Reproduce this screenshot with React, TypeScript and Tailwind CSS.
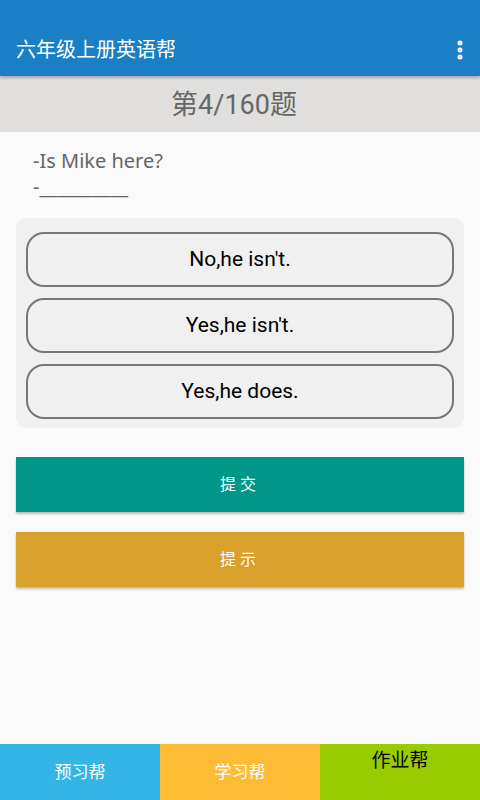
import { EllipsisVertical } from "lucide-react";

const options = ["No,he isn't.", "Yes,he isn't.", "Yes,he does."];

const App = () => {
  return (
    <div className="flex h-[800px] w-[480px] flex-col bg-[#fafafa] font-['Roboto','Noto_Sans_CJK_SC',sans-serif]">
      {/* Toolbar */}
      <div className="relative z-10 flex h-[76px] shrink-0 items-end bg-[#1a7fc4] pb-[12px] pl-4 pr-2 shadow-[0_2px_3px_rgba(0,0,0,0.25)]">
        <h1 className="flex-1 text-[20px] leading-[28px] text-white">六年级上册英语帮</h1>
        <EllipsisVertical className="mb-[2px] h-6 w-6 text-white" strokeWidth={3} />
      </div>

      {/* Question number */}
      <div className="flex h-[56px] shrink-0 items-center justify-center bg-[#e0dfdd] pr-[12px]">
        <span className="mt-[3px] text-[27px] text-[#666]">第4/160题</span>
      </div>

      <div className="flex-1">
        {/* Question */}
        <div className="px-[33px] pt-[16px] font-['Noto_Sans','Noto_Sans_CJK_SC',sans-serif] text-[20px] leading-[26px] text-[#666]">
          <p>-Is Mike here?</p>
          <p>-__________</p>
        </div>

        {/* Options */}
        <div className="mx-4 mt-[18px] flex flex-col gap-[11px] rounded-[10px] bg-[#f0f0f0] px-[10px] pb-[9px] pt-[14px]">
          {options.map((o) => (
            <button
              key={o}
              className="flex h-[55px] items-center justify-center rounded-[18px] border-2 border-[#777] bg-[#f0f0f0] text-[21px] text-black"
            >
              {o}
            </button>
          ))}
        </div>

        {/* Actions */}
        <button className="mx-4 mt-[29px] flex h-[55px] w-[448px] items-center justify-center bg-[#009688] text-[16px] tracking-[4px] text-white shadow-[0_2px_2px_rgba(0,0,0,0.25)]">
          提交
        </button>
        <button className="mx-4 mt-[20px] flex h-[55px] w-[448px] items-center justify-center bg-[#d9a02c] text-[16px] tracking-[4px] text-white shadow-[0_2px_2px_rgba(0,0,0,0.25)]">
          提示
        </button>
      </div>

      {/* Bottom tabs */}
      <div className="grid h-[56px] shrink-0 grid-cols-3">
        <div className="flex items-center justify-center bg-[#33b5e5] pt-[2px] text-[17px] text-white">预习帮</div>
        <div className="flex items-center justify-center bg-[#ffbb33] pt-[2px] text-[17px] text-white">学习帮</div>
        <div className="flex items-start justify-center bg-[#99cc00] pt-[3px] text-[19px] text-black">作业帮</div>
      </div>
    </div>
  );
};

export default App;
